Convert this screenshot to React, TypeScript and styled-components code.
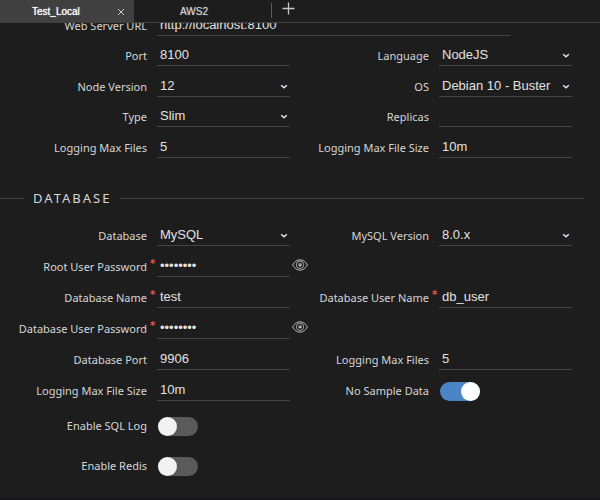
import React, { useId, useState } from "react";
import styled, { createGlobalStyle } from "styled-components";

const GlobalStyle = createGlobalStyle`
  *, *::before, *::after { box-sizing: border-box; }
  body { margin: 0; background: #1d1d1d; }
  button, input, select { font: inherit; color: inherit; }
`;

const Page = styled.main`
  display: flex;
  flex-direction: column;
  height: 100vh;
  overflow: hidden;
  background: #1d1d1d;
  color: #d6d6d6;
  font-family: "Noto Sans", sans-serif;
  font-size: 11px;
  border-bottom: 1px solid #141014;
`;

const TabBar = styled.nav`
  display: flex;
  flex: none;
  height: 23px;
  font-family: "Liberation Sans", sans-serif;
  font-size: 10px;
  background: linear-gradient(#3f3f3f, #3f3f3f) bottom / 100% 1px no-repeat #1d1d1d;
`;

const Tab = styled.div<{ $active?: boolean }>`
  display: flex;
  align-items: center;
  width: ${(p) => (p.$active ? 134 : 137)}px;
  background: ${(p) => (p.$active ? "#404040" : "transparent")};
  color: ${(p) => (p.$active ? "#ffffff" : "#d6d6d6")};
  text-shadow: 0 0 1px ${(p) => (p.$active ? "#ffffff" : "#8a8a8a")};
`;

const TabButton = styled.button`
  flex: 1;
  padding: 0 0 0 32px;
  border: 0;
  background: none;
  text-align: left;
  line-height: 22px;
  text-shadow: inherit;

  ${Tab}:nth-child(2) & {
    padding-left: 46px;
  }
`;

const IconButton = styled.button`
  display: flex;
  align-items: center;
  justify-content: center;
  padding: 0;
  border: 0;
  background: none;
  color: #c8c8c8;
`;

const CloseButton = styled(IconButton)`
  width: 26px;
  height: 23px;
`;

const AddButton = styled(IconButton)`
  align-self: flex-start;
  width: 33px;
  height: 17px;
`;

const TabDivider = styled.span`
  width: 1px;
  height: 15px;
  margin-top: 3px;
  background: #5a5a5a;
`;

const Viewport = styled.div`
  flex: 1;
  overflow: hidden;
`;

const Form = styled.form`
  margin-top: -18px;
`;

const FieldGrid = styled.div<{ $rows: string }>`
  display: grid;
  grid-template-columns: 157px minmax(0, 1fr) 149px minmax(0, 1fr);
  grid-auto-rows: ${(p) => p.$rows};
  padding-right: 28px;
`;

const SwitchGrid = styled(FieldGrid)`
  margin-top: 5px;
`;

const Label = styled.label<{ $centered?: boolean }>`
  display: flex;
  align-self: ${(p) => (p.$centered ? "center" : "end")};
  justify-content: flex-end;
  line-height: 20px;
  white-space: nowrap;
`;

const Mark = styled.span`
  width: 10px;
  padding-left: 3px;
  color: #f0504c;
  font-family: "DejaVu Sans", sans-serif;
  font-size: 10px;
  font-weight: 700;
  line-height: 13px;
`;

const Control = styled.div<{ $span?: number }>`
  position: relative;
  align-self: end;
  grid-column: span ${(p) => p.$span ?? 1};
`;

const TextBox = styled.input<{ $wide?: boolean }>`
  display: block;
  width: ${(p) => (p.$wide ? "85%" : "100%")};
  height: 21px;
  padding: 0 3px 1px;
  border: 0;
  border-bottom: 1px solid #454545;
  border-radius: 0;
  outline: 0;
  background: none;
  color: #e2e2e2;
  font-family: "Liberation Sans", sans-serif;
  font-size: 13px;
`;

const SelectBox = styled.select`
  display: block;
  width: 100%;
  height: 21px;
  padding: 0 3px 1px;
  border: 0;
  border-bottom: 1px solid #454545;
  border-radius: 0;
  outline: 0;
  appearance: none;
  background: none;
  color: #e2e2e2;
  font-family: "Liberation Sans", sans-serif;
  font-size: 13px;

  option { background: #1d1d1d; }
`;

const Caret = styled.svg`
  position: absolute;
  right: 2px;
  top: 8px;
  pointer-events: none;
`;

const RevealButton = styled(IconButton)`
  align-self: end;
  justify-self: start;
  width: 20px;
  height: 24px;
`;

const Switch = styled.input<{ $centered?: boolean }>`
  display: flex;
  align-self: ${(p) => (p.$centered ? "center" : "end")};
  width: 40px;
  height: 19px;
  margin: 0 0 0 1px;
  appearance: none;
  border-radius: 10px;
  background: #5a5a5a;

  &::before {
    content: "";
    width: 19px;
    height: 19px;
    border-radius: 50%;
    background: #f2f2f2;
  }
  &:checked {
    justify-content: flex-end;
    background: #4a86c5;
  }
  &:checked::before { background: #ffffff; }
`;

const Section = styled.h2`
  display: flex;
  align-items: center;
  gap: 9px;
  margin: 30px 15px 7px 0;
  font-size: 13px;
  font-weight: 400;
  line-height: 20px;
  letter-spacing: 2px;

  &::before, &::after {
    content: "";
    height: 1px;
    background: #3f3f3f;
  }
  &::before { width: 24px; }
  &::after { flex: 1; }
`;

const Spacer = styled.span<{ $span: number }>`
  grid-column: span ${(p) => p.$span};
`;

type FieldProps = { label: string; value: string; required?: boolean };

function FieldLabel({ id, text, required, centered }: { id: string; text: string; required?: boolean; centered?: boolean }) {
  return (
    <Label htmlFor={id} $centered={centered}>
      {text}
      <Mark>{required ? "*" : ""}</Mark>
    </Label>
  );
}

function TextField({ label, value, required, wide }: FieldProps & { wide?: boolean }) {
  const id = useId();
  return (
    <>
      <FieldLabel id={id} text={label} required={required} />
      <Control $span={wide ? 3 : 1}>
        <TextBox id={id} defaultValue={value} $wide={wide} />
      </Control>
    </>
  );
}

function SelectField({ label, value }: FieldProps) {
  const id = useId();
  return (
    <>
      <FieldLabel id={id} text={label} />
      <Control>
        <SelectBox id={id} defaultValue={value}>
          <option>{value}</option>
        </SelectBox>
        <Caret width="8" height="6" viewBox="0 0 8 6" fill="none" stroke="#e8e8f4" strokeWidth="1.5">
          <path d="M1.2 1.3 4 3.8 6.8 1.3" />
        </Caret>
      </Control>
    </>
  );
}

function PasswordField({ label, value }: FieldProps) {
  const id = useId();
  const [shown, setShown] = useState(false);
  return (
    <>
      <FieldLabel id={id} text={label} required />
      <Control>
        <TextBox id={id} type={shown ? "text" : "password"} defaultValue={value} autoComplete="off" />
      </Control>
      <RevealButton type="button" aria-label="Show password" onClick={() => setShown(!shown)}>
        <svg width="16" height="12" viewBox="0 0 16 12" fill="none" stroke="currentColor">
          <path d="M.6 6C2.4 2.6 5 .8 8 .8s5.6 1.8 7.4 5.2C13.6 9.4 11 11.200 8 11.200S2.400 9.400.6 6Z" strokeWidth=".9" />
          <circle cx="8" cy="5.8" r="3.700" strokeWidth=".8" />
          <circle cx="8" cy="5.800" r="1.700" fill="currentColor" stroke="none" />
          <circle cx="7.300" cy="5" r=".7" fill="#1d1d1d" stroke="none" />
        </svg>
      </RevealButton>
    </>
  );
}

function SwitchField({ label, on, centered }: { label: string; on?: boolean; centered?: boolean }) {
  const id = useId();
  return (
    <>
      <FieldLabel id={id} text={label} centered={centered} />
      <Switch id={id} type="checkbox" role="switch" defaultChecked={on} $centered={centered} />
    </>
  );
}

export default function App() {
  return (
    <Page>
      <GlobalStyle />
      <TabBar>
        <Tab $active>
          <TabButton type="button">Test_Local</TabButton>
          <CloseButton type="button" aria-label="Close tab">
            <svg width="8" height="8" viewBox="0 0 8 8" stroke="currentColor">
              <path d="m1 1 6 6M7 1 1 7" />
            </svg>
          </CloseButton>
        </Tab>
        <Tab>
          <TabButton type="button">AWS2</TabButton>
        </Tab>
        <TabDivider />
        <AddButton type="button" aria-label="Add tab">
          <svg width="13" height="13" viewBox="0 0 13 13" stroke="currentColor" strokeWidth="1.3">
            <path d="M6.5.5v12M.5 6.5h12" />
          </svg>
        </AddButton>
      </TabBar>
      <Viewport>
        <Form onSubmit={(e) => e.preventDefault()}>
          <FieldGrid $rows="31px 30px">
            <TextField label="Web Server URL" value="http://localhost:8100" wide />
            <TextField label="Port" value="8100" />
            <SelectField label="Language" value="NodeJS" />
            <SelectField label="Node Version" value="12" />
            <SelectField label="OS" value="Debian 10 - Buster" />
            <SelectField label="Type" value="Slim" />
            <TextField label="Replicas" value="" />
            <TextField label="Logging Max Files" value="5" />
            <TextField label="Logging Max File Size" value="10m" />
          </FieldGrid>
          <Section>DATABASE</Section>
          <FieldGrid $rows="31px">
            <SelectField label="Database" value="MySQL" />
            <SelectField label="MySQL Version" value="8.0.x" />
            <PasswordField label="Root User Password" value="password" />
            <Spacer $span={1} />
            <TextField label="Database Name" value="test" required />
            <TextField label="Database User Name" value="db_user" required />
            <PasswordField label="Database User Password" value="password" />
            <Spacer $span={1} />
            <TextField label="Database Port" value="9906" />
            <TextField label="Logging Max Files" value="5" />
            <TextField label="Logging Max File Size" value="10m" />
            <SwitchField label="No Sample Data" on />
          </FieldGrid>
          <SwitchGrid $rows="40px">
            <SwitchField label="Enable SQL Log" centered />
            <Spacer $span={2} />
            <SwitchField label="Enable Redis" centered />
            <Spacer $span={2} />
          </SwitchGrid>
        </Form>
      </Viewport>
    </Page>
  );
}
